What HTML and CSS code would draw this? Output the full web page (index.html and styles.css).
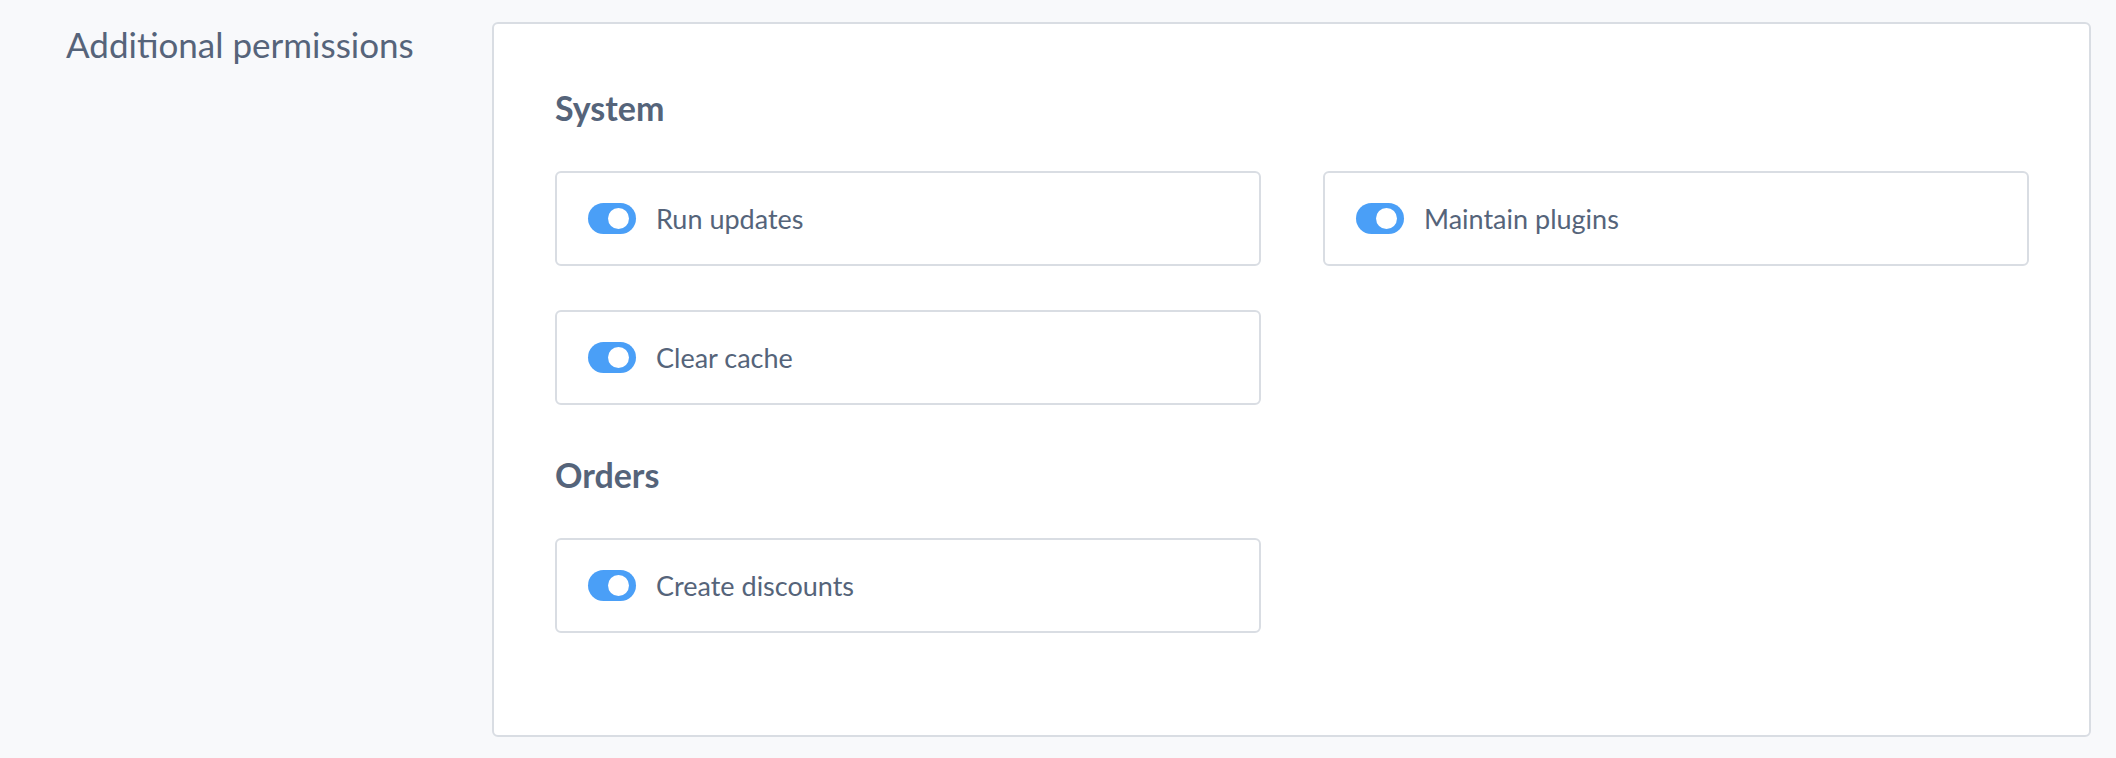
FILE: index.html
```html
<!DOCTYPE html>
<html lang="en">
<head>
<meta charset="utf-8">
<title>Additional permissions</title>
<link rel="stylesheet" href="styles.css">
</head>
<body>
<div class="settings-row">
  <div class="settings-label">Additional permissions</div>
  <div class="card">
    <section class="group">
      <h3 class="group-title">System</h3>
      <div class="grid">
        <label class="perm"><span class="toggle"><span class="knob"></span></span><span class="perm-text">Run updates</span></label>
        <label class="perm"><span class="toggle"><span class="knob"></span></span><span class="perm-text">Maintain plugins</span></label>
        <label class="perm"><span class="toggle"><span class="knob"></span></span><span class="perm-text">Clear cache</span></label>
      </div>
    </section>
    <section class="group">
      <h3 class="group-title">Orders</h3>
      <div class="grid">
        <label class="perm"><span class="toggle"><span class="knob"></span></span><span class="perm-text">Create discounts</span></label>
      </div>
    </section>
  </div>
</div>
</body>
</html>
```
FILE: styles.css
```css
* { box-sizing: border-box; }
html, body { margin: 0; padding: 0; }
body {
  background: #f8f9fb;
  font-family: "Lato", "Noto Sans", sans-serif;
  color: #525f73;
  width: 2116px;
  height: 758px;
  overflow: hidden;
}
.settings-row {
  display: flex;
  padding-top: 22px;
}
.settings-label {
  width: 492px;
  padding-left: 66px;
  padding-top: 2px;
  font-size: 35px;
  line-height: 40px;
  color: #56647a;
}
.card {
  width: 1599px;
  height: 715px;
  background: #fff;
  border: 2px solid #d9dde3;
  border-radius: 6px;
  padding: 63px 61px 0 61px;
}
.group-title {
  margin: 0 0 43px 0;
  font-size: 34px;
  line-height: 41px;
  font-weight: 700;
  color: #55647a;
}
.group + .group .group-title { margin-top: 49px; }
.grid {
  display: grid;
  grid-template-columns: 706px 706px;
  column-gap: 62px;
  row-gap: 44px;
}
.perm {
  display: flex;
  align-items: center;
  height: 95px;
  border: 2px solid #d9dde3;
  border-radius: 6px;
  padding-left: 31px;
}
.toggle {
  display: flex;
  justify-content: flex-end;
  align-items: center;
  width: 48px;
  height: 31px;
  padding: 0 7px;
  border-radius: 16px;
  background: #4a9ff7;
  flex-shrink: 0;
}
.knob {
  width: 21px;
  height: 21px;
  border-radius: 50%;
  background: #fff;
}
.perm-text {
  margin-left: 20px;
  font-size: 27px;
  color: #55647a;
}
```
